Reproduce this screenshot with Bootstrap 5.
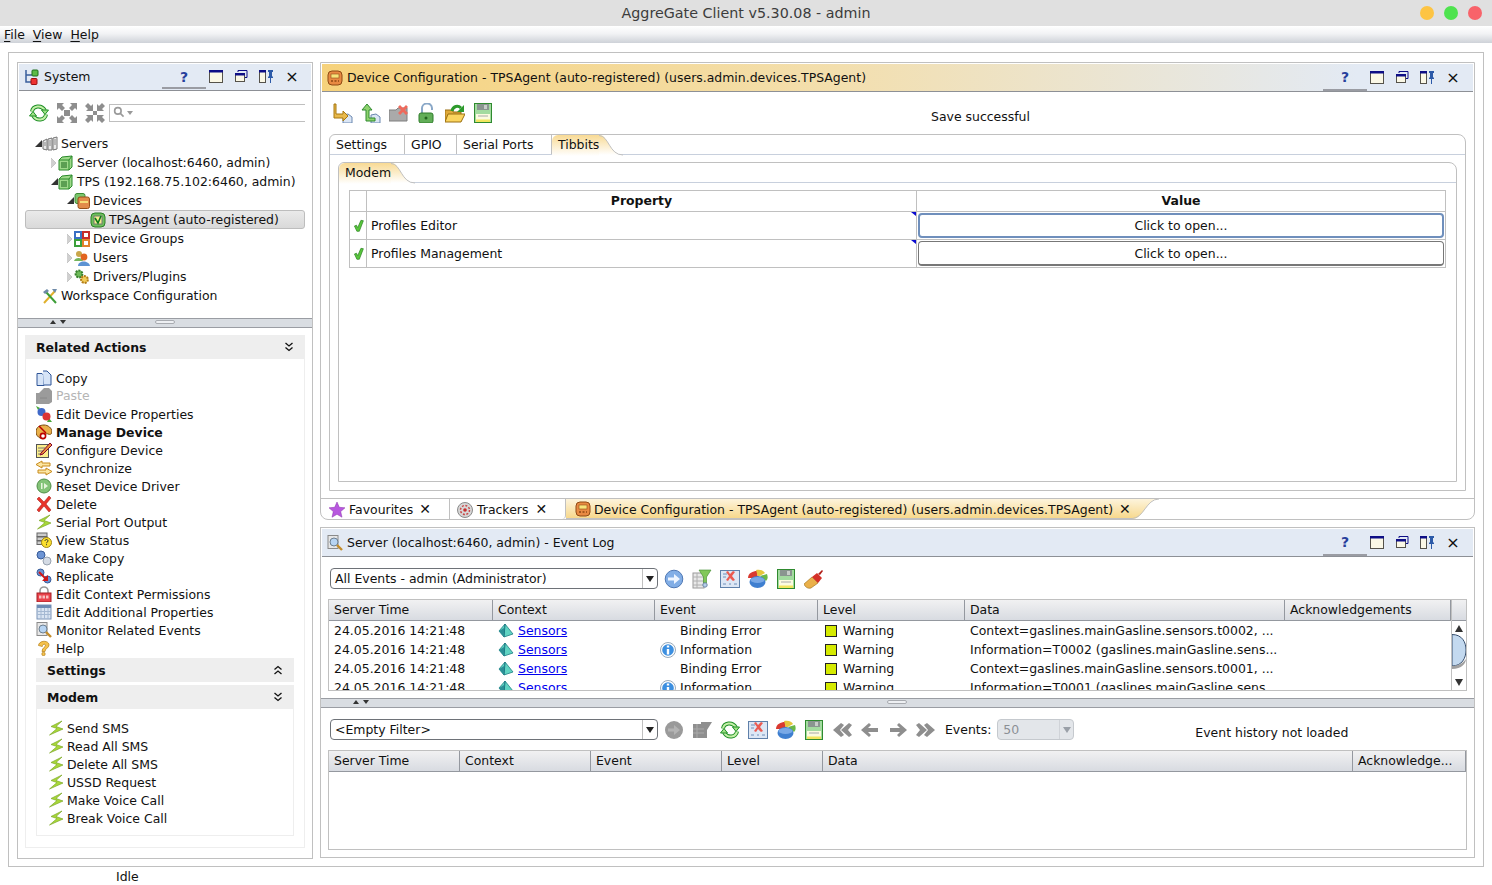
<!DOCTYPE html>
<html lang="en">

<head>
    <meta charset="UTF-8">
    <meta name="viewport" content="width=device-width, initial-scale=1.0">
    <link rel="stylesheet" href="https://cdn.jsdelivr.net/npm/bootstrap@5.3.1/dist/css/bootstrap.min.css">
    <title>AggreGate Client</title>
    <style>
        html, body { height: 885px; }
        body { width: 1492px; overflow: hidden; margin: 0; background: #fff; color: #111; font: 12.46px/15px "DejaVu Sans", sans-serif; }
        svg.ic { width: 16px; height: 16px; flex: none; display: block; }
        svg.ic20 { width: 20px; height: 20px; flex: none; display: block; }

        .win-title { height: 26px; background: #e0e0e0; display: grid; grid-template-columns: 1fr auto 1fr; align-items: center; font-size: 14.3px; color: #3c3c3c; }
        .win-dots { display: flex; justify-content: flex-end; gap: 10px; padding-right: 10px; }
        .win-dot { width: 14px; height: 14px; border-radius: 50%; }
        .menu-bar { height: 17px; background: linear-gradient(#fff, #f2f3f5 45%, #ced2d8); display: flex; gap: 8px; padding-left: 4px; line-height: 17px; }
        .menu-bar u { text-underline-offset: 2px; }

        .frame { position: relative; margin: 9px 8px 0; height: 815px; border: 1px solid #c0c0c0; padding: 9px 8px 7px; display: flex; gap: 7px; }
        .pane { border: 1px solid #c0c0c0; display: flex; flex-direction: column; }
        .pane-left { width: 296px; }
        .pane-right { width: 1155px; display: flex; flex-direction: column; gap: 7px; }

        .pane-head { height: 28px; margin: 1px 1px 0; background: #e3eaf4; border-bottom: 1px solid #8d9096; display: flex; align-items: center; padding-left: 5px; gap: 4px; flex: none; }
        .pane-head.hot { background: linear-gradient(90deg, #f6d27c, #f3dfae 45%, #e3eaf4 90%); }
        .head-tools { margin-left: auto; display: flex; align-items: center; height: 100%; padding-right: 6px; }
        #sysTools { padding-right: 5px; }
        .head-help { width: 44px; height: 100%; margin-right: -3px; text-align: center; color: #27409c; font-weight: bold; font-size: 14px; line-height: 26px; border-bottom: 2px solid #9a9ca3; }
        .head-btn { width: 25px; display: flex; justify-content: center; }
        .head-x { width: 28px; text-align: center; font-size: 16px; line-height: 16px; }

        .side-tools { display: flex; align-items: center; gap: 8px; padding: 11px 7px 0 11px; height: 32px; }
        .side-search { flex: 1; height: 18px; min-height: 0; padding: 0 0 0 3px; border: 1px solid #bfbfbf; border-right: 0; border-radius: 0; margin-left: -4px; display: flex; align-items: center; }
        .tree { list-style: none; margin: 11px 7px 0; padding: 0; height: 184px; }
        .tree li { height: 19px; display: flex; align-items: center; white-space: nowrap; border: 1px solid transparent; }
        .tree li.sel { background: linear-gradient(#eaeaea, #d9d9d9); border-color: #bdbdbd; border-radius: 3px; }
        .tw-box { width: 7px; flex: none; display: flex; align-items: center; }
        .tw { width: 0; height: 0; flex: none; border-style: solid; }
        .tw-open { border-width: 0 0 7px 7px; border-color: transparent transparent #333 transparent; }
        .tw-closed { border-width: 5px 0 5px 5px; border-color: transparent transparent transparent #d0d0d0; filter: drop-shadow(0 0 .6px #777); }

        .splitter { height: 10px; background: #d9dde2; border-top: 1px solid #9a9da3; border-bottom: 1px solid #9a9da3; position: relative; flex: none; }
        .split-arrows { position: absolute; top: 1px; display: flex; gap: 4px; }
        .up { width: 0; height: 0; border-style: solid; border-width: 0 3.5px 4px; border-color: transparent transparent #333; }
        .down { width: 0; height: 0; border-style: solid; border-width: 4px 3.5px 0; border-color: #333 transparent transparent; }
        .split-grip { position: absolute; top: 1px; width: 20px; height: 4px; background: #eef0f3; border: 1px solid #a8abb0; border-radius: 2px; }

        .task-head { height: 24px; background: #eee; font-weight: bold; display: flex; align-items: center; justify-content: space-between; flex: none; }
        .task-body { border: 1px solid #eee; border-top: 0; }
        .act { height: 18px; display: flex; align-items: center; gap: 4px; white-space: nowrap; }
        #modemActs .act { gap: 3px; }

        .cfg-tools { height: 42px; display: flex; align-items: center; position: relative; padding-left: 12px; gap: 8px; flex: none; }
        .cfg-msg { position: absolute; left: 610px; top: 17px; }
        .tab-box { border: 1px solid #c0c0c0; border-radius: 6px 8px 0 0; display: flex; flex-direction: column; }
        .tab-strip { display: flex; height: 20px; border-bottom: 1px solid #c8d0dd; flex: none; }
        .tab-item { padding: 0 15px 0 6px; line-height: 20px; border-right: 1px solid #c0c0c0; white-space: nowrap; }
        .tab-item.on { background: linear-gradient(#f8da94, #fff); border-right: 0; padding: 0 0 0 6px; border-radius: 6px 0 0 0; margin-bottom: -1px; line-height: 20px; height: 21px; }
        .tab-tail { display: block; flex: none; }

        .prop-table { table-layout: fixed; border-collapse: collapse; width: 1097px; margin: 7px 0 0 10px; }
        .prop-table th, .prop-table td { border: 1px solid #c0c0c0; padding: 0 4px; }
        .prop-table th { height: 21px; padding-bottom: 2px; text-align: center; }
        .prop-table td { height: 28px; }
        .prop-table td.named { position: relative; }
        .prop-table td.named::after { content: ""; position: absolute; right: 0; top: 0; border-style: solid; border-width: 0 5px 4px 0; border-color: transparent #0a0ad0 transparent transparent; }
        .prop-table td.val { padding: 0 1px; }
        .prop-table .btn { display: block; width: 100%; height: 25px; padding: 0; font-size: 12.46px; line-height: 23px; color: #111; background: #fff; border: 1px solid #777; border-bottom-width: 2px; border-radius: 4px; }
        .prop-table .btn.foc { border: 2px solid #6f8fbc; line-height: 21px; }

        .dock-tabs { height: 21px; margin-top: 7px; display: flex; border-top: 1px solid #c0c0c0; flex: none; }
        .dock-tab { display: flex; align-items: center; gap: 4px; padding: 1px 0 0 8px; white-space: nowrap; }
        .dock-tab .tx { font-size: 14px; margin-left: 2px; }
        .dock-hot { background: linear-gradient(#fdf4dc, #f7d88c); padding-left: 9px; width: 566px; border-bottom: 1px solid #c0c0c0; }

        .log-tools { display: flex; align-items: center; gap: 8px; flex: none; }
        .combo { height: 21px; border: 1px solid #6e7278; border-radius: 4px; display: flex; align-items: stretch; overflow: hidden; background: #fff; flex: none; width: 328px; margin-right: -2px; }
        .combo span { flex: 1; padding-left: 4px; line-height: 19px; }
        .combo i { width: 15px; border-left: 1px solid #c0c0c0; position: relative; }
        .combo i::after { content: ""; position: absolute; left: 3px; top: 7px; border-style: solid; border-width: 6px 4px 0; border-color: #222 transparent transparent; }

        .ev-grid { display: flex; border: 1px solid #c0c0c0; margin-left: 7px; width: 1139px; }
        .ev-main { flex: 1; overflow: hidden; }
        .ev-head { display: flex; height: 21px; background: linear-gradient(#f1f1f2, #d8dbe1); border-bottom: 1px solid #94989f; line-height: 19px; }
        .ev-head div { border-right: 1px solid #94989f; padding-left: 5px; white-space: nowrap; overflow: hidden; }
        .ev-row { display: flex; height: 19px; line-height: 19px; }
        .ev-row > div { padding-left: 5px; white-space: nowrap; overflow: hidden; display: flex; align-items: center; gap: 4px; }
        .ev-row a { color: #0000ee; }
        .lvl-box { width: 12px; height: 12px; background: #d5ea00; border: 1px solid #222; flex: none; margin: 0 1px; }
        .ev-side { width: 15px; border-left: 1px solid #c0c0c0; display: flex; flex-direction: column; flex: none; }
        .ev-corner { height: 21px; background: linear-gradient(#f1f1f2, #d8dbe1); border-bottom: 1px solid #94989f; }
        .status-idle { padding: 1px 0 0 116px; line-height: 18px; }
        .num-box { width: 77px; height: 21px; background: #e3e6ea; border: 1px solid #c5c9ce; border-radius: 4px; color: #8b8f95; padding-left: 5px; line-height: 19px; display: flex; }
    </style>
</head>

<body>
    <!-- icon sheet -->
    <svg width="0" height="0" style="position:absolute">
        <defs>
            <linearGradient id="tabFill" x1="0" y1="0" x2="0" y2="1"><stop offset="0" stop-color="#f8da94"/><stop offset="1" stop-color="#fff"/></linearGradient>
            <linearGradient id="dockFill" x1="0" y1="0" x2="0" y2="1"><stop offset="0" stop-color="#fdf4dc"/><stop offset="1" stop-color="#f7d88c"/></linearGradient>
            <symbol id="i-sync" viewBox="0 0 20 20">
                <g fill="none" stroke="#1f8f27" stroke-width="4"><path d="M3 8.500C4 3 12 1 16 7.500"/><path d="M17 11.500C16 17 8 19 4 12.500"/></g>
                <g fill="none" stroke="#c4f0a8" stroke-width="2"><path d="M3 8.500C4 3 12 1 16 7.500"/><path d="M17 11.500C16 17 8 19 4 12.500"/></g>
                <path d="M12.500 7h7L16 11.500zM.5 13h7L4 8.500z" fill="#9fe285" stroke="#1f8f27"/>
            </symbol>
            <symbol id="i-exp" viewBox="0 0 20 20"><path fill="#8e8e8e" d="M0 0h7L5 2l3 3-3 3-3-3-2 2zM20 0v7l-2-2-3 3-3-3 3-3-2-2zM0 20v-7l2 2 3-3 3 3-3 3 2 2zM20 20h-7l2-2-3-3 3-3 3 3 2-2zM7 7h6v6H7z"/></symbol>
            <symbol id="i-col" viewBox="0 0 20 20"><path fill="#8e8e8e" d="M8 8H1l2-2-3-3 3-3 3 3 2-2zM12 8V1l2 2 3-3 3 3-3 3 2 2zM8 12v7l-2-2-3 3-3-3 3-3-2-2zM12 12h7l-2 2 3 3-3 3-3-3-2 2zM8 8h4v4H8z"/></symbol>
            <symbol id="i-sys" viewBox="0 0 16 16"><path d="M2 1v12h6M2 6h6" fill="none" stroke="#3a5f9c" stroke-width="1.500"/><rect x="8" y="1" width="6" height="6" rx="1" fill="#5dbb46" stroke="#1e6f1e"/><rect x="7" y="9.500" width="6" height="6" rx="1" fill="#e33" stroke="#911"/></symbol>
            <symbol id="i-servers" viewBox="0 0 16 16"><g fill="#e9e9e9" stroke="#777"><path d="M1 5l4-2v11l-4-1z"/><path d="M6 3l4-1v12l-4 0z"/><path d="M11 2l4-1v12l-4 1z"/></g><path d="M7 5h2M7 7h2M7 9h2M12 4h2M12 6h2M12 8h2M2 7h2M2 9h2" stroke="#888"/></symbol>
            <symbol id="i-server" viewBox="0 0 16 16"><path d="M4 2l10-1v11l-3 3H1V5z" fill="#9ed98a" stroke="#2a8a2a"/><path d="M1 5h10v10M11 5l3-4" fill="none" stroke="#2a8a2a"/><path d="M3 8h6M3 10h6M3 12h6" stroke="#19651b"/></symbol>
            <symbol id="i-devs" viewBox="0 0 16 16"><rect x="1" y="0.500" width="10" height="10" rx="2" fill="#7cc66c" stroke="#3c8a34"/><rect x="4" y="4" width="11.500" height="11.500" rx="2" fill="#e28b4a" stroke="#964f1a"/><path d="M6 9h8" stroke="#f6dc77" stroke-width="2"/></symbol>
            <symbol id="i-agent" viewBox="0 0 16 16"><rect x="1" y="1" width="14" height="14" rx="4" fill="#6cc05a" stroke="#2e7d2a"/><rect x="4" y="4" width="8" height="8" fill="#f4ef8c" stroke="#777"/><path d="M5 6l3 5 3-7" fill="none" stroke="#0a7a18" stroke-width="1.600"/></symbol>
            <symbol id="i-groups" viewBox="0 0 16 16"><g fill="#fff" stroke-width="2"><rect x="1" y="1" width="6" height="6" stroke="#3a6fc4"/><rect x="9" y="1" width="6" height="6" stroke="#c52b2b"/><rect x="1" y="9" width="6" height="6" stroke="#3ba03b"/><rect x="9" y="9" width="6" height="6" stroke="#e2812b"/></g></symbol>
            <symbol id="i-users" viewBox="0 0 16 16"><circle cx="5" cy="4" r="3" fill="#c9a64a"/><path d="M0 11c1-4 8-4 9 0z" fill="#74b45a"/><circle cx="10" cy="7" r="3.400" fill="#e2641f"/><path d="M4 16c0-6 11-6 12 0z" fill="#5d93d3"/></symbol>
            <symbol id="i-plug" viewBox="0 0 16 16"><circle cx="5" cy="5" r="3.400" fill="#6fbb5a" stroke="#38802e" stroke-width="2" stroke-dasharray="2 1"/><circle cx="10.500" cy="10.500" r="3.400" fill="#f2cc58" stroke="#b27c17" stroke-width="2" stroke-dasharray="2 1"/></symbol>
            <symbol id="i-tools" viewBox="0 0 16 16"><path d="M2 15L13 3" stroke="#e0b02c" stroke-width="2"/><path d="M14 15L4 4" stroke="#3d9e38" stroke-width="2"/><path d="M1 4l4-3 2 2-4 3zM10 1h5l-2 4z" fill="#6e8aa8"/></symbol>
            <symbol id="i-copy" viewBox="0 0 16 16"><path d="M1 3.500h5l2 2v10H1z" fill="#d6e4f7" stroke="#2f5597"/><path d="M7 1h4l4 4v10H8" fill="#d6e4f7" stroke="#2f5597"/></symbol>
            <symbol id="i-paste" viewBox="0 0 16 16"><path d="M0 5h3L8 0h5l3 3v11l-3 2H0z" fill="#9b9b9b"/><path d="M4 10h7" stroke="#888"/></symbol>
            <symbol id="i-props" viewBox="0 0 16 16"><path d="M0 0l4 2-2 2zM16 16l-5 0 2-4z" fill="#48a838"/><circle cx="5.500" cy="6" r="4" fill="#3f68c8"/><circle cx="10.500" cy="10.500" r="4" fill="#dc3535"/></symbol>
            <symbol id="i-manage" viewBox="0 0 16 16"><path d="M0 8c0-5 4-7 8-7s8 3 8 7c0 2-2 3-4 2s-3 1-3 3-3 2-5 1-4-3-4-6z" fill="#e9b04a" stroke="#7a4a10"/><circle cx="7" cy="12" r="2.600" fill="#fff" stroke="#b00" stroke-width="1.600"/><path d="M3 2l7 7" stroke="#b00" stroke-width="1.500"/></symbol>
            <symbol id="i-config" viewBox="0 0 16 16"><rect x="0.500" y="2.500" width="12" height="13" fill="#fbee8b" stroke="#555"/><path d="M2 6h7M2 9h5M2 12h5" stroke="#777"/><path d="M5 11L14 1l2 2-9 9-3 1z" fill="#e89438" stroke="#803"/></symbol>
            <symbol id="i-synch" viewBox="0 0 16 16"><path d="M6 1v2h8v3H6v2L0 4.500zM10 8v2H2v3h8v2l6-3.500z" fill="#fce6a2" stroke="#c88a1a"/></symbol>
            <symbol id="i-reset" viewBox="0 0 16 16"><circle cx="8" cy="8" r="7" fill="#83c377" stroke="#4f8e47"/><path d="M5 5h1.500v6H5zM8 5l4 3-4 3z" fill="#e6f5dc"/></symbol>
            <symbol id="i-del" viewBox="0 0 16 16"><path d="M1 3l2-2 5 5 5-6 2 2-5 6 5 6-2 2-5-6-5 6-2-2 5-6z" fill="#e8352b" stroke="#a01410" stroke-width=".5"/></symbol>
            <symbol id="i-bolt" viewBox="0 0 16 16"><path d="M14 1L3 6.500l6 2L1.500 15 15 9 8 6.500z" fill="#a8d838" stroke="#7ca828" stroke-width=".7"/></symbol>
            <symbol id="i-status" viewBox="0 0 16 16"><rect x="1" y="1" width="10" height="3.500" fill="#ccc" stroke="#666"/><rect x="1" y="5" width="10" height="3.500" fill="#ccc" stroke="#666"/><rect x="1" y="9" width="10" height="3.500" fill="#ccc" stroke="#666"/><circle cx="10.500" cy="10.500" r="5" fill="#fbe02f" stroke="#a08510"/><path d="M9 9c0-2 3-2 3 0 0 1-1.500 1-1.500 2.200M10.500 12.200v1" fill="none" stroke="#333"/></symbol>
            <symbol id="i-mcopy" viewBox="0 0 16 16"><circle cx="5" cy="5" r="4" fill="#6c94d4" stroke="#365a98"/><circle cx="11" cy="11" r="4" fill="#d4dbe5" stroke="#98a2b0"/></symbol>
            <symbol id="i-repl" viewBox="0 0 16 16"><circle cx="4.500" cy="4.500" r="3.500" fill="#6c94d4" stroke="#365a98"/><circle cx="11.500" cy="11.500" r="3.500" fill="#6c94d4" stroke="#365a98"/><path d="M3 4l8 8" stroke="#d01717" stroke-width="2"/><path d="M12 7v6H6z" fill="#d01717"/></symbol>
            <symbol id="i-lock" viewBox="0 0 16 16"><path d="M4 8V5a4 4 0 0 1 8 0v3" fill="none" stroke="#999" stroke-width="1.600"/><rect x="1" y="7" width="14" height="9" fill="#e8424a" stroke="#a51f25"/><path d="M3 11h10" stroke="#f7c0c0" stroke-width="3" stroke-dasharray="2.500 1"/></symbol>
            <symbol id="i-table" viewBox="0 0 16 16"><rect x="1" y="1" width="14" height="14" fill="#d9e4f2" stroke="#7a94b8"/><rect x="1" y="1" width="14" height="3" fill="#6d8bb4"/><path d="M1 7.500h14M1 10.500h14M5 4v11M8.500 4v11M12 4v11" stroke="#a4b8d2"/></symbol>
            <symbol id="i-mon" viewBox="0 0 16 16"><rect x="1" y="0.500" width="10" height="13" fill="#e6e6e6" stroke="#8a8a8a"/><circle cx="7" cy="7" r="4" fill="#b7d4f2" stroke="#6d7f90"/><path d="M10 10l5 5" stroke="#c48d2b" stroke-width="2.400"/></symbol>
            <symbol id="i-help" viewBox="0 0 16 16"><path d="M2.500 5.500C3 0 13 0 13 5c0 3-4 3.500-4 6.500H6C6 7.500 10 7 9.500 5c-.500-1.500-3-1-3.200 1.500z" fill="#f5c24d" stroke="#b27c17" stroke-width=".7"/><circle cx="7.500" cy="14" r="1.700" fill="#f5c24d" stroke="#b27c17" stroke-width=".7"/></symbol>
            <symbol id="i-devcfg" viewBox="0 0 16 16"><rect x="1" y="1" width="14" height="14" rx="4" fill="#e88a42" stroke="#8f4a14"/><rect x="4" y="4" width="8" height="4" fill="#f7e37a" stroke="#8f4a14" stroke-width=".6"/><path d="M4 11h8" stroke="#8f4a14" stroke-dasharray="2 1.500" stroke-width="1.500"/></symbol>
            <symbol id="i-imp" viewBox="0 0 20 20"><path d="M10 12l5-1 4 3v6h-9z" fill="#dbe6f5" stroke="#6b88b0"/><path d="M3 1v10h7V8l5 5-5 5v-3H1V1z" fill="#e8b94c" stroke="#a87810"/></symbol>
            <symbol id="i-exp2" viewBox="0 0 20 20"><path d="M10 12l5-1 4 3v6h-9z" fill="#dbe6f5" stroke="#6b88b0"/><path d="M6 1l5 6H8v8h6v3H5V7H1z" fill="#8ed26e" stroke="#2f8a2f"/></symbol>
            <symbol id="i-fdel" viewBox="0 0 20 20"><path d="M0 7h7l2-2h9v13H0z" fill="#aaa" stroke="#7f7f7f"/><path d="M11 2l3 3 3-3 2 2-3 3 3 3-2 2-3-3-3 3-2-2 3-3-3-3z" fill="#ee6a5c"/></symbol>
            <symbol id="i-unlock" viewBox="0 0 20 20"><path d="M5 10V6a5 5 0 0 1 10-1v2" fill="none" stroke="#8aa8c8" stroke-width="2"/><rect x="2" y="10" width="14" height="10" rx="2" fill="#62ae58" stroke="#2f7d2a"/><circle cx="9" cy="15" r="1.500" fill="#22621f"/></symbol>
            <symbol id="i-open" viewBox="0 0 20 20"><path d="M0 7h8v2h8v9H0z" fill="#dfa93a" stroke="#9a6f12"/><path d="M3 11h17l-4 8H0z" fill="#fbd55f" stroke="#9a6f12"/><path d="M7 8c1-5 6-6 9-3" fill="none" stroke="#2c9a2c" stroke-width="3"/><path d="M19 2v7h-7z" fill="#2c9a2c"/></symbol>
            <symbol id="i-save" viewBox="0 0 20 20"><rect x="1.500" y="0.500" width="17" height="19" fill="#a3dba0" stroke="#2f8a2f"/><rect x="4" y="1" width="12" height="6" fill="#8a9590"/><rect x="11" y="2" width="3" height="4" fill="#c7cdc9"/><rect x="3" y="11" width="14" height="8" fill="#fbfbe0"/><rect x="3" y="16.500" width="14" height="2.500" fill="#f1e65e"/><path d="M5 13h10" stroke="#aaa"/></symbol>
            <symbol id="i-check" viewBox="0 0 16 16"><path d="M3 8l2.500-1 1.500 3L11 1l3 .500-5 13H6z" fill="#59c63c" stroke="#217a18" stroke-width=".8"/></symbol>
            <symbol id="i-star" viewBox="0 0 16 16"><path d="M8 0l2.300 5.300 5.700.5-4.300 3.800 1.300 5.600L8 12.300 3 15.200l1.300-5.600L0 5.800l5.700-.5z" fill="#b858df" stroke="#8a32ac" stroke-width=".5"/></symbol>
            <symbol id="i-track" viewBox="0 0 16 16"><circle cx="8" cy="8" r="7.500" fill="#d7d7d7" stroke="#8a8a8a"/><circle cx="8" cy="8" r="4.500" fill="none" stroke="#c84a4a" stroke-width="1.500" stroke-dasharray="2 1.500"/><circle cx="8" cy="8" r="1.800" fill="#c82d2d"/></symbol>
            <symbol id="i-go" viewBox="0 0 20 20"><circle cx="10" cy="10" r="8.800" fill="#82aee6" stroke="#4f78b4"/><path d="M4 8.500h6V5l6 5-6 5v-3.500H4z" fill="#eef5ff"/></symbol>
            <symbol id="i-gogrey" viewBox="0 0 20 20"><circle cx="10" cy="10" r="9" fill="#9a9a9a"/><path d="M4 8.500h6V5l6 5-6 5v-3.500H4z" fill="#b3b3b3"/></symbol>
            <symbol id="i-filter" viewBox="0 0 20 20"><rect x="1" y="4" width="11" height="15" fill="#e9e9e9" stroke="#9a9a9a"/><path d="M1 8h11M1 12h11M1 16h11M5 4v15" stroke="#b0b0b0"/><path d="M7 1h12l-4.500 7v6h-3V8z" fill="#82c85a" stroke="#3e8a2e" stroke-width=".6"/><circle cx="13" cy="16" r="2.200" fill="#b6cfeb" stroke="#6e86a6"/></symbol>
            <symbol id="i-filtg" viewBox="0 0 20 20"><path d="M1 4h8V2h11l-5 8v8H1z" fill="#8f8f8f"/><path d="M1 9h11M1 13h11M5 4v14" stroke="#aaa"/></symbol>
            <symbol id="i-xdel" viewBox="0 0 20 20"><rect x="0.500" y="1.500" width="19" height="17" fill="#dde7f5" stroke="#5f80aa"/><path d="M3 5h4M3 8h3M3 15h3M9 15h2M14 15h3" stroke="#7090ba"/><path d="M6 3l2-1 2 3 3-3 2 1-3 4 3 4-2 1-3-3-2 3-2-1 3-4z" fill="#ec5a50"/></symbol>
            <symbol id="i-chart" viewBox="0 0 20 20"><path d="M0 9c0-5 5-7 9-7l1 7z" fill="#d93a30"/><path d="M8 1c5-1 8 1 9 3l-7 4z" fill="#e5c63c"/><path d="M12 7l7-2c1 3 1 5-1 7z" fill="#6ab848"/><ellipse cx="9.500" cy="13" rx="8" ry="6" fill="#3f7fd0"/><ellipse cx="9.500" cy="11" rx="7" ry="3" fill="#78a8e6"/></symbol>
            <symbol id="i-brush" viewBox="0 0 20 20"><path d="M0 15l8-7 6 6-7 5c-3 1-6-1-7-4z" fill="#eab04a" stroke="#9a6c14" stroke-width=".6"/><path d="M8 8l6 6 4-5-5-5z" fill="#d43028"/><path d="M14 5l4-4 1 1-3 4z" fill="#b01e18"/></symbol>
            <symbol id="i-first" viewBox="0 0 20 20"><path d="M9 3L1 10l8 7 3-2-4-5 4-5zM17 3l-8 7 8 7 3-2-4-5 4-5z" fill="#8e8e8e"/></symbol>
            <symbol id="i-prev" viewBox="0 0 20 20"><path d="M9 3l2 2-3 3h10v4H8l3 3-2 2-8-7z" fill="#8e8e8e"/></symbol>
            <symbol id="i-next" viewBox="0 0 20 20"><path d="M11 3L9 5l3 3H2v4h10l-3 3 2 2 8-7z" fill="#8e8e8e"/></symbol>
            <symbol id="i-last" viewBox="0 0 20 20"><path d="M3 3l8 7-8 7-3-2 4-5-4-5zM11 3l8 7-8 7-3-2 4-5-4-5z" fill="#8e8e8e"/></symbol>
            <symbol id="i-ctx" viewBox="0 0 16 16"><path d="M7 1L1 8l5 6 9-3z" fill="#5fd3c2" stroke="#1f7f83" stroke-width=".8"/><path d="M7 1L6 14" stroke="#167"/><path d="M1 8l5-3 1-4-1 13z" fill="#2b8f96"/></symbol>
            <symbol id="i-info" viewBox="0 0 16 16"><circle cx="8" cy="8" r="7.500" fill="#fff" stroke="#9ab"/><circle cx="8" cy="8" r="5.800" fill="#3c8fe0"/><path d="M6.800 3.500h2.400v2H6.800zM6.800 7h2.400v5.500H6.800z" fill="#fff"/></symbol>
            <symbol id="i-max" viewBox="0 0 16 16"><rect x="1.500" y="1.500" width="13" height="12" fill="#fbf8e6" stroke="#55524a"/><rect x="1" y="1" width="14" height="2.500" fill="#0e0e86"/></symbol>
            <symbol id="i-rest" viewBox="0 0 16 16"><path d="M5 3V1.500h9v7h-2" fill="none" stroke="#0e0e86"/><rect x="2.500" y="4.500" width="9" height="8" fill="#fbf8e6" stroke="#55524a"/><rect x="2" y="4" width="10" height="2.500" fill="#0e0e86"/></symbol>
            <symbol id="i-pin" viewBox="0 0 16 16"><rect x="1.500" y="1.500" width="6" height="12" fill="#fbf8e6" stroke="#55524a"/><rect x="1" y="1" width="7" height="2.500" fill="#0e0e86"/><path d="M10 1h5v2h-1v4l1 1v1h-2v5h-1V9h-2V8l1-1V3h-1z" fill="#2c5aa8"/></symbol>
            <symbol id="i-search" viewBox="0 0 16 16"><circle cx="6" cy="6" r="4" fill="none" stroke="#9a9a9a" stroke-width="2"/><path d="M9 9l4 4" stroke="#9a9a9a" stroke-width="2"/></symbol>
            <symbol id="i-dchev" viewBox="0 0 10 10"><path d="M1.500 1l3.500 3 3.500-3M1.500 5.500l3.500 3 3.500-3" fill="none" stroke="#111" stroke-width="1.300"/></symbol>
            <symbol id="i-uchev" viewBox="0 0 10 10"><path d="M1.500 4.500l3.500-3 3.500 3M1.500 9l3.500-3 3.500 3" fill="none" stroke="#111" stroke-width="1.300"/></symbol>
        </defs>
    </svg>

    <div class="win-title">
        <div></div>
        <div>AggreGate Client v5.30.08 - admin</div>
        <div class="win-dots">
            <span class="win-dot" style="background:#fdc443"></span>
            <span class="win-dot" style="background:#4fe34f"></span>
            <span class="win-dot" style="background:#f8636a"></span>
        </div>
    </div>
    <div class="menu-bar"><span><u>F</u>ile</span><span><u>V</u>iew</span><span><u>H</u>elp</span></div>

    <div class="frame">
        <!-- left column -->
        <div class="pane pane-left">
            <div class="pane-head" style="height:27px;padding-bottom:1px">
                <svg class="ic"><use href="#i-sys"/></svg><span>System</span>
                <div class="head-tools" id="sysTools"></div>
            </div>
            <div class="side-tools">
                <svg class="ic20"><use href="#i-sync"/></svg>
                <svg class="ic20"><use href="#i-exp"/></svg>
                <svg class="ic20"><use href="#i-col"/></svg>
                <div class="side-search"><svg class="ic" style="width:13px;height:13px"><use href="#i-search"/></svg><span class="down" style="border-top-color:#999;margin-left:1px"></span></div>
            </div>
            <ul class="tree" id="tree"></ul>
            <div class="splitter"><div class="split-arrows" style="left:32px"><span class="up"></span><span class="down"></span></div><div class="split-grip" style="left:137px"></div></div>
            <div style="padding:7px 7px 0">
                <div class="task-head" style="padding:0 11px"><span>Related Actions</span><svg class="ic" style="width:10px;height:10px"><use href="#i-dchev"/></svg></div>
                <div class="task-body" style="height:489px;padding:10px 10px 0">
                    <div id="actions"></div>
                    <div class="task-head" style="padding:0 11px;margin-top:1px"><span>Settings</span><svg class="ic" style="width:10px;height:10px"><use href="#i-uchev"/></svg></div>
                    <div class="task-head" style="padding:0 11px;margin-top:3px"><span>Modem</span><svg class="ic" style="width:10px;height:10px"><use href="#i-dchev"/></svg></div>
                    <div class="task-body" style="height:127px;padding:10px 11px 0" id="modemActs"></div>
                </div>
            </div>
        </div>

        <!-- right column -->
        <div class="pane-right">
            <div class="pane" style="height:458px;border-radius:0 0 8px 8px">
                <div class="pane-head hot">
                    <svg class="ic"><use href="#i-devcfg"/></svg><span>Device Configuration - TPSAgent (auto-registered) (users.admin.devices.TPSAgent)</span>
                    <div class="head-tools" id="cfgTools"></div>
                </div>
                <div class="cfg-tools">
                    <svg class="ic20"><use href="#i-imp"/></svg>
                    <svg class="ic20"><use href="#i-exp2"/></svg>
                    <svg class="ic20"><use href="#i-fdel"/></svg>
                    <svg class="ic20"><use href="#i-unlock"/></svg>
                    <svg class="ic20"><use href="#i-open"/></svg>
                    <svg class="ic20"><use href="#i-save"/></svg>
                    <div class="cfg-msg">Save successful</div>
                </div>
                <div class="tab-box" style="margin:0 8px;height:357px;padding-bottom:8px">
                    <div class="tab-strip">
                        <div class="tab-item" style="width:75px">Settings</div>
                        <div class="tab-item" style="width:52px">GPIO</div>
                        <div class="tab-item" style="width:95px">Serial Ports</div>
                        <div class="tab-item on">Tibbits</div>
                        <svg class="tab-tail" width="24" height="21"><path d="M0 0C10 0 10 20 24 20H0z" fill="url(#tabFill)"/><path d="M0 .5C10 .5 10 20 24 20" fill="none" stroke="#c0c0c0"/></svg>
                    </div>
                    <div class="tab-box" style="margin:7px 8px 0;flex:1;border-radius:6px 8px 0 0">
                        <div class="tab-strip">
                            <div class="tab-item on" style="padding-right:0">Modem</div>
                            <svg class="tab-tail" width="24" height="21"><path d="M0 0C10 0 10 20 24 20H0z" fill="url(#tabFill)"/><path d="M0 .5C10 .5 10 20 24 20" fill="none" stroke="#c0c0c0"/></svg>
                        </div>
                        <table class="prop-table">
                            <colgroup><col style="width:17px"><col style="width:550px"><col></colgroup>
                            <tr><th></th><th>Property</th><th>Value</th></tr>
                            <tr><td style="padding:0"><svg class="ic" style="width:13px;height:14px;margin:auto"><use href="#i-check"/></svg></td><td class="named">Profiles Editor</td><td class="val"><button class="btn foc">Click to open...</button></td></tr>
                            <tr><td style="padding:0"><svg class="ic" style="width:13px;height:14px;margin:auto"><use href="#i-check"/></svg></td><td class="named">Profiles Management</td><td class="val"><button class="btn">Click to open...</button></td></tr>
                        </table>
                    </div>
                </div>
                <div class="dock-tabs">
                    <div class="dock-tab" style="width:128px"><svg class="ic"><use href="#i-star"/></svg><span>Favourites</span><span class="tx">✕</span></div>
                    <div class="dock-tab" style="width:117px;padding-left:7px;border-left:1px solid #c0c0c0;border-right:1px solid #c0c0c0;border-bottom-right-radius:4px"><svg class="ic"><use href="#i-track"/></svg><span>Trackers</span><span class="tx" style="margin-left:3px">✕</span></div>
                    <div class="dock-tab dock-hot"><svg class="ic"><use href="#i-devcfg"/></svg><span style="margin-left:-1px">Device Configuration - TPSAgent (auto-registered) (users.admin.devices.TPSAgent)</span><span class="tx">✕</span></div>
                    <svg class="tab-tail" width="27" height="20"><path d="M0 20C12 20 14 0 27 0H0z" fill="url(#dockFill)"/><path d="M0 19.500C12 19.500 14 0 27 0" fill="none" stroke="#c0c0c0"/></svg>
                </div>
            </div>

            <div class="pane" style="height:331px">
                <div class="pane-head">
                    <svg class="ic"><use href="#i-mon"/></svg><span>Server (localhost:6460, admin) - Event Log</span>
                    <div class="head-tools" id="logTools"></div>
                </div>
                <div class="log-tools" style="margin:11px 0 0 9px">
                    <div class="combo"><span>All Events - admin (Administrator)</span><i></i></div>
                    <svg class="ic20"><use href="#i-go"/></svg>
                    <svg class="ic20"><use href="#i-filter"/></svg>
                    <svg class="ic20"><use href="#i-xdel"/></svg>
                    <svg class="ic20"><use href="#i-chart"/></svg>
                    <svg class="ic20"><use href="#i-save"/></svg>
                    <svg class="ic20"><use href="#i-brush"/></svg>
                </div>
                <div class="ev-grid" style="margin-top:10px;height:92px">
                    <div class="ev-main">
                        <div class="ev-head" id="evHead1"></div>
                        <div id="evRows"></div>
                    </div>
                    <div class="ev-side">
                        <div class="ev-corner"></div>
                        <div class="d-flex justify-content-center" style="padding-top:4px"><span class="up" style="border-width:0 4px 7px"></span></div>
                        <svg width="14" height="36" style="margin-top:2px;display:block"><path d="M0 .5C10 .5 14 8 14 16s-4 16-14 16z" fill="#c3d9ef" stroke="#374f6e"/><path d="M0 32c6 0 10-2 14-7 0 4-4 10-14 10z" fill="#a0a0a0"/></svg>
                        <div class="d-flex justify-content-center mt-auto" style="padding-bottom:4px"><span class="down" style="border-width:7px 4px 0"></span></div>
                    </div>
                </div>
                <div class="splitter" style="margin-top:7px;height:10px"><div class="split-arrows" style="left:32px"><span class="up"></span><span class="down"></span></div><div class="split-grip" style="left:566px"></div></div>
                <div class="log-tools" style="margin:11px 0 0 9px">
                    <div class="combo"><span>&lt;Empty Filter&gt;</span><i></i></div>
                    <svg class="ic20"><use href="#i-gogrey"/></svg>
                    <svg class="ic20"><use href="#i-filtg"/></svg>
                    <svg class="ic20"><use href="#i-sync"/></svg>
                    <svg class="ic20"><use href="#i-xdel"/></svg>
                    <svg class="ic20"><use href="#i-chart"/></svg>
                    <svg class="ic20"><use href="#i-save"/></svg>
                    <svg class="ic20"><use href="#i-first"/></svg>
                    <svg class="ic20"><use href="#i-prev"/></svg>
                    <svg class="ic20"><use href="#i-next"/></svg>
                    <svg class="ic20"><use href="#i-last"/></svg>
                    <span style="margin-left:1px">Events:</span>
                    <div class="num-box" style="margin-left:-2px"><span class="flex-grow-1">50</span><span style="border-left:1px solid #d0d3d8;width:14px;position:relative"><span class="down" style="position:absolute;left:3px;top:7px;border-top-color:#9aa0a8;border-width:6px 4px 0"></span></span></div>
                    <span style="margin-left:113px;margin-top:6px">Event history not loaded</span>
                </div>
                <div class="ev-grid" style="margin-top:10px;height:100px">
                    <div class="ev-main"><div class="ev-head" id="evHead2"></div></div>
                </div>
            </div>
        </div>
    </div>
    <div class="status-idle">Idle</div>

    <script>
        var icon = function (id, cls) { return `<svg class="${cls || 'ic'}"><use href="#${id}"/></svg>`; };

        // pane header buttons, same on all three panes
        var headTools = `<div class="head-help">?</div>
            <div class="head-btn">${icon('i-max')}</div><div class="head-btn">${icon('i-rest')}</div>
            <div class="head-btn">${icon('i-pin')}</div><div class="head-x">×</div>`;
        ['sysTools', 'cfgTools', 'logTools'].forEach(function (id) {
            document.getElementById(id).innerHTML = headTools;
        });

        // level, twisty, icon, label, selected
        var treeItems = [
            [1, 'open', 'i-servers', 'Servers'],
            [2, 'closed', 'i-server', 'Server (localhost:6460, admin)'],
            [2, 'open', 'i-server', 'TPS (192.168.75.102:6460, admin)'],
            [3, 'open', 'i-devs', 'Devices'],
            [4, '', 'i-agent', 'TPSAgent (auto-registered)', true],
            [3, 'closed', 'i-groups', 'Device Groups'],
            [3, 'closed', 'i-users', 'Users'],
            [3, 'closed', 'i-plug', 'Drivers/Plugins'],
            [1, '', 'i-tools', 'Workspace Configuration']
        ];
        document.getElementById('tree').innerHTML = treeItems.map(function (t) {
            var pad = 9 + (t[0] - 1) * 16;
            var tw = t[1] ? `<span class="tw tw-${t[1]}"></span>` : '';
            return `<li class="${t[4] ? 'sel' : ''}" style="padding-left:${pad}px"><span class="tw-box">${tw}</span>${icon(t[2])}<span style="margin-left:3px">${t[3]}</span></li>`;
        }).join('');

        var actions = [
            ['i-copy', 'Copy'], ['i-paste', 'Paste', 'color:#b5b5b5;margin-bottom:2px'], ['i-props', 'Edit Device Properties'],
            ['i-manage', 'Manage Device', 'font-weight:bold'], ['i-config', 'Configure Device'], ['i-synch', 'Synchronize'],
            ['i-reset', 'Reset Device Driver'], ['i-del', 'Delete'], ['i-bolt', 'Serial Port Output'],
            ['i-status', 'View Status'], ['i-mcopy', 'Make Copy'], ['i-repl', 'Replicate'],
            ['i-lock', 'Edit Context Permissions'], ['i-table', 'Edit Additional Properties'],
            ['i-mon', 'Monitor Related Events'], ['i-help', 'Help']
        ];
        document.getElementById('actions').innerHTML = actions.map(function (a) {
            return `<div class="act">${icon(a[0])}<span style="${a[2] || ''}">${a[1]}</span></div>`;
        }).join('');

        document.getElementById('modemActs').innerHTML = ['Send SMS', 'Read All SMS', 'Delete All SMS', 'USSD Request', 'Make Voice Call', 'Break Voice Call'].map(function (a) {
            return `<div class="act">${icon('i-bolt')}<span>${a}</span></div>`;
        }).join('');

        var cols1 = [['Server Time', 164], ['Context', 162], ['Event', 163], ['Level', 147], ['Data', 320], ['Acknowledgements', 166]];
        var cols2 = [['Server Time', 131], ['Context', 131], ['Event', 131], ['Level', 101], ['Data', 530], ['Acknowledge...', 113]];
        var headHtml = function (cols) {
            return cols.map(function (c) { return `<div style="width:${c[1]}px;flex:none">${c[0]}</div>`; }).join('');
        };
        document.getElementById('evHead1').innerHTML = headHtml(cols1);
        document.getElementById('evHead2').innerHTML = headHtml(cols2);

        var events = [
            ['Binding Error', 'Context=gaslines.mainGasline.sensors.t0002, ...', false],
            ['Information', 'Information=T0002 (gaslines.mainGasline.sens...', true],
            ['Binding Error', 'Context=gaslines.mainGasline.sensors.t0001, ...', false],
            ['Information', 'Information=T0001 (gaslines.mainGasline.sens...', true]
        ];
        document.getElementById('evRows').innerHTML = events.map(function (e) {
            return `<div class="ev-row">
                <div style="width:164px">24.05.2016 14:21:48</div>
                <div style="width:162px">${icon('i-ctx')}<a href="#">Sensors</a></div>
                <div style="width:163px">${e[2] ? icon('i-info') : '<span style="width:16px"></span>'}<span>${e[0]}</span></div>
                <div style="width:147px;padding-left:6px"><span class="lvl-box"></span><span style="margin-left:1px">Warning</span></div>
                <div style="width:320px">${e[1]}</div>
            </div>`;
        }).join('');
    </script>
</body>

</html>
